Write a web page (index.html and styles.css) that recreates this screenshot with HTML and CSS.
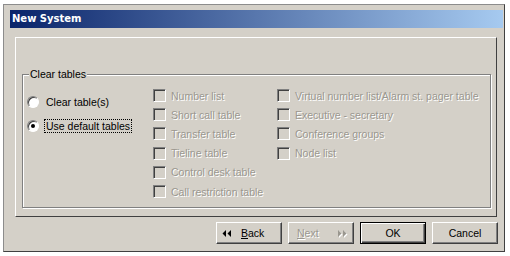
FILE: index.html
```html
<!DOCTYPE html>
<html lang="en">

<head>
    <meta charset="UTF-8">
    <meta name="viewport" content="width=device-width, initial-scale=1.0">
    <title>New System</title>
    <link rel="stylesheet" href="styles.css">
</head>

<body>
    <div class="window">
        <div class="titlebar">New System</div>

        <div class="panel">
            <fieldset class="group">
                <legend>Clear tables</legend>
                <div class="group-body">
                    <div class="radios">
                        <div class="radio-row"><span class="radio"></span><span>Clear table(s)</span></div>
                        <div class="radio-row"><span class="radio checked"></span><span class="focus">Use default tables</span></div>
                    </div>

                    <div class="checks">
                        <div class="check-row"><span class="box"></span>Number list</div>
                        <div class="check-row"><span class="box"></span>Short call table</div>
                        <div class="check-row"><span class="box"></span>Transfer table</div>
                        <div class="check-row"><span class="box"></span>Tieline table</div>
                        <div class="check-row"><span class="box"></span>Control desk table</div>
                        <div class="check-row"><span class="box"></span>Call restriction table</div>
                    </div>

                    <div class="checks">
                        <div class="check-row"><span class="box"></span>Virtual number list/Alarm st. pager table</div>
                        <div class="check-row"><span class="box"></span>Executive - secretary</div>
                        <div class="check-row"><span class="box"></span>Conference groups</div>
                        <div class="check-row"><span class="box"></span>Node list</div>
                    </div>
                </div>
            </fieldset>
        </div>

        <div class="buttons">
            <button class="btn back">
                <svg class="arrows" width="9" height="7" viewBox="0 0 9 7">
                    <polygon points="4,0 4,7 0.5,3.5" />
                    <polygon points="9,0 9,7 5.5,3.5" />
                </svg>
                <span><u>B</u>ack</span>
            </button>
            <button class="btn next" disabled>
                <span><u>N</u>ext</span>
                <svg class="arrows" width="9" height="7" viewBox="0 0 9 7">
                    <polygon points="0,0 0,7 3.5,3.5" />
                    <polygon points="5,0 5,7 8.5,3.5" />
                </svg>
            </button>
            <button class="btn default">OK</button>
            <button class="btn">Cancel</button>
        </div>
    </div>
</body>

</html>
```

FILE: styles.css
```css
body {
    margin: 0;
    background-color: #fff;
    font-family: "Liberation Sans", Arial, sans-serif;
    font-size: 10.5px;
    color: #000;
}

.window {
    box-sizing: border-box;
    width: 502px;
    height: 248px;
    margin: 4px 0 0 3px;
    display: flex;
    flex-direction: column;
    background-color: #d4d0c8;
    border: 1px solid;
    border-color: #8c8c8c #404040 #404040 #8c8c8c;
}

.titlebar {
    height: 18px;
    margin: 5px 1px 0 6px;
    padding-left: 2px;
    background: linear-gradient(to right, #0a246a, #a6caf0);
    color: #fff;
    font-family: "DejaVu Sans", sans-serif;
    font-weight: bold;
    font-size: 10px;
    line-height: 18px;
}

.panel {
    box-sizing: border-box;
    height: 180px;
    margin: 9px 7px 0 11px;
    display: flex;
    flex-direction: column;
    border: 1px solid;
    border-color: #fff #404040 #404040 #fff;
}

.group {
    flex: 1;
    min-width: 0;
    margin: 29px 5px 8px 6px;
    padding: 0;
    border: 1px solid #808080;
    box-shadow: inset 1px 1px 0 #fff, 1px 1px 0 #fff;
}

.group legend {
    margin-left: 6px;
    padding: 0 1px;
    line-height: 14px;
    background-color: #d4d0c8;
}

.group-body {
    display: grid;
    grid-template-columns: 130px 124px 1fr;
    padding-top: 5px;
}

.radios {
    display: flex;
    flex-direction: column;
    gap: 8px;
    padding: 8px 0 0 4px;
}

.radio-row {
    display: flex;
    align-items: center;
    height: 16px;
}

.radio {
    position: relative;
    box-sizing: border-box;
    width: 12px;
    height: 12px;
    margin-right: 7px;
    border-radius: 50%;
    background-color: #fff;
    border: 1px solid;
    border-color: #808080 #fff #fff #808080;
    box-shadow: inset 1px 1px 0 #404040;
}

.radio.checked::after {
    content: "";
    position: absolute;
    left: 3px;
    top: 3px;
    width: 4px;
    height: 4px;
    border-radius: 50%;
    background-color: #000;
}

.focus {
    padding: 0 1px;
    margin-left: -1px;
    outline: 1px dotted #000;
}

.checks {
    display: flex;
    flex-direction: column;
}

.check-row {
    display: flex;
    align-items: center;
    height: 19.2px;
    white-space: nowrap;
    color: #9a978f;
    text-shadow: 1px 1px 0 #fff;
}

.box {
    box-sizing: border-box;
    width: 13px;
    height: 13px;
    margin-right: 5px;
    border: 1px solid;
    border-color: #808080 #fff #fff #808080;
    box-shadow: inset 1px 1px 0 #404040;
}

.buttons {
    display: flex;
    justify-content: flex-end;
    gap: 6px;
    margin-top: 5px;
    padding-right: 6px;
}

.btn {
    box-sizing: border-box;
    width: 66px;
    height: 22px;
    padding: 0;
    display: flex;
    align-items: center;
    justify-content: center;
    font: inherit;
    color: #000;
    background-color: #d4d0c8;
    border: 1px solid;
    border-color: #fff #404040 #404040 #fff;
    box-shadow: inset -1px -1px 0 #808080;
}

.btn.default {
    border-color: #000;
    box-shadow: inset 1px 1px 0 #fff, inset -1px -1px 0 #404040, inset -2px -2px 0 #808080;
}

.btn.back {
    justify-content: flex-start;
    padding-left: 5px;
}

.btn.back .arrows {
    margin-right: 10px;
}

.btn.next {
    justify-content: space-between;
    padding: 0 6px 0 8px;
    color: #9a978f;
    text-shadow: 1px 1px 0 #fff;
}

.arrows {
    fill: currentColor;
}

.btn.next .arrows {
    filter: drop-shadow(1px 1px 0 #fff);
}
```
